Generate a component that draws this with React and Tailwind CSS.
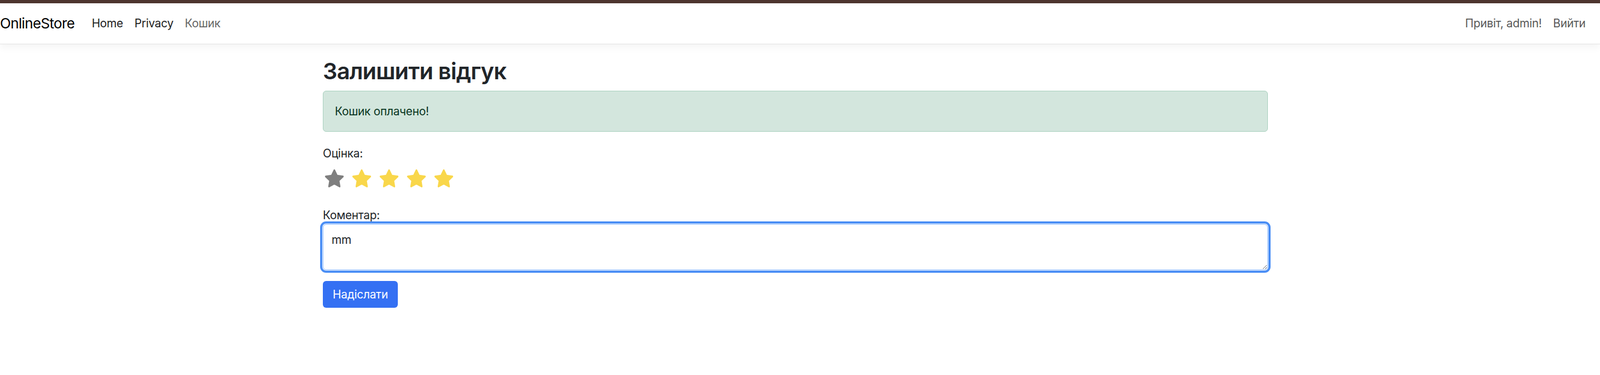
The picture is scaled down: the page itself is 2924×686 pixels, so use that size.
import React from 'react';

const Star = ({ color }) => (
    <svg width="40" height="40" viewBox="0 0 24 24" className="shrink-0">
        <polygon
            points="12,2.6 14.9,8.6 21.4,9.5 16.7,14 17.8,20.5 12,17.4 6.2,20.5 7.3,14 2.6,9.5 9.1,8.6"
            fill={color}
            stroke={color}
            strokeWidth="1.8"
            strokeLinejoin="round"
        />
    </svg>
);

export default function App() {
    return (
        <div className="min-h-screen bg-white text-[#212529] tracking-[-0.015em] font-['Inter','Liberation_Sans',sans-serif]">
            {/* top accent bar */}
            <div className="h-[6px] bg-[#4e3630]"></div>

            {/* Navbar */}
            <nav className="h-[75px] flex items-center justify-between pr-[16px] border-b border-[#e3e3e3] shadow-[0_5px_15px_rgba(0,0,0,0.05)] bg-white relative z-10">
                <div className="flex items-center">
                    <a className="text-[26px] text-black mr-[21px] leading-none tracking-[-0.025em]">OnlineStore</a>
                    <ul className="flex items-center text-[20.8px]">
                        <li className="px-[10.4px] text-[#212121]">Home</li>
                        <li className="px-[10.4px] text-[#212121]">Privacy</li>
                        <li className="px-[10.4px] text-[#666666]">Кошик</li>
                    </ul>
                </div>
                <ul className="flex items-center text-[20.8px] text-[#595959]">
                    <li className="px-[10.4px]">Привіт, admin!</li>
                    <li className="px-[10.4px]">Вийти</li>
                </ul>
            </nav>

            {/* Main */}
            <main className="ml-[590px] w-[1727px] pt-[24px]">
                <h2 className="text-[41.6px] font-semibold tracking-[-0.02em] leading-[50px] mb-[11px]">Залишити відгук</h2>

                <div className="h-[75px] bg-[#d3e6dd] border border-[#a7d0bd] rounded-[6px] px-[21px] flex items-center text-[20.8px] text-[#0a3622]">
                    Кошик оплачено!
                </div>

                <div className="mt-[24px] text-[20.8px] leading-[31px]">Оцінка:</div>
                <div className="flex gap-[10px] mt-[11px] ml-[1px]">
                    <Star color="#7f7f7f" />
                    <Star color="#f9d74b" />
                    <Star color="#f9d74b" />
                    <Star color="#f9d74b" />
                    <Star color="#f9d74b" />
                </div>

                <div className="mt-[31px] text-[20.8px] leading-[31px]">Коментар:</div>
                <textarea
                    defaultValue="mm"
                    className="mt-[1px] block w-[1727px] h-[84px] border border-[#86b7fe] rounded-[6px] px-[15px] pt-[12px] pb-[4px] text-[20.8px] leading-[31px] text-[#212529] outline-[4px] outline-solid outline-[#4a8ef5] outline-offset-[1px] resize-y"
                ></textarea>

                <button className="mt-[20px] h-[49px] w-[137px] rounded-[6px] bg-[#3470f3] text-white text-[20.8px] flex items-center justify-center">
                    Надіслати
                </button>
            </main>
        </div>
    );
}
